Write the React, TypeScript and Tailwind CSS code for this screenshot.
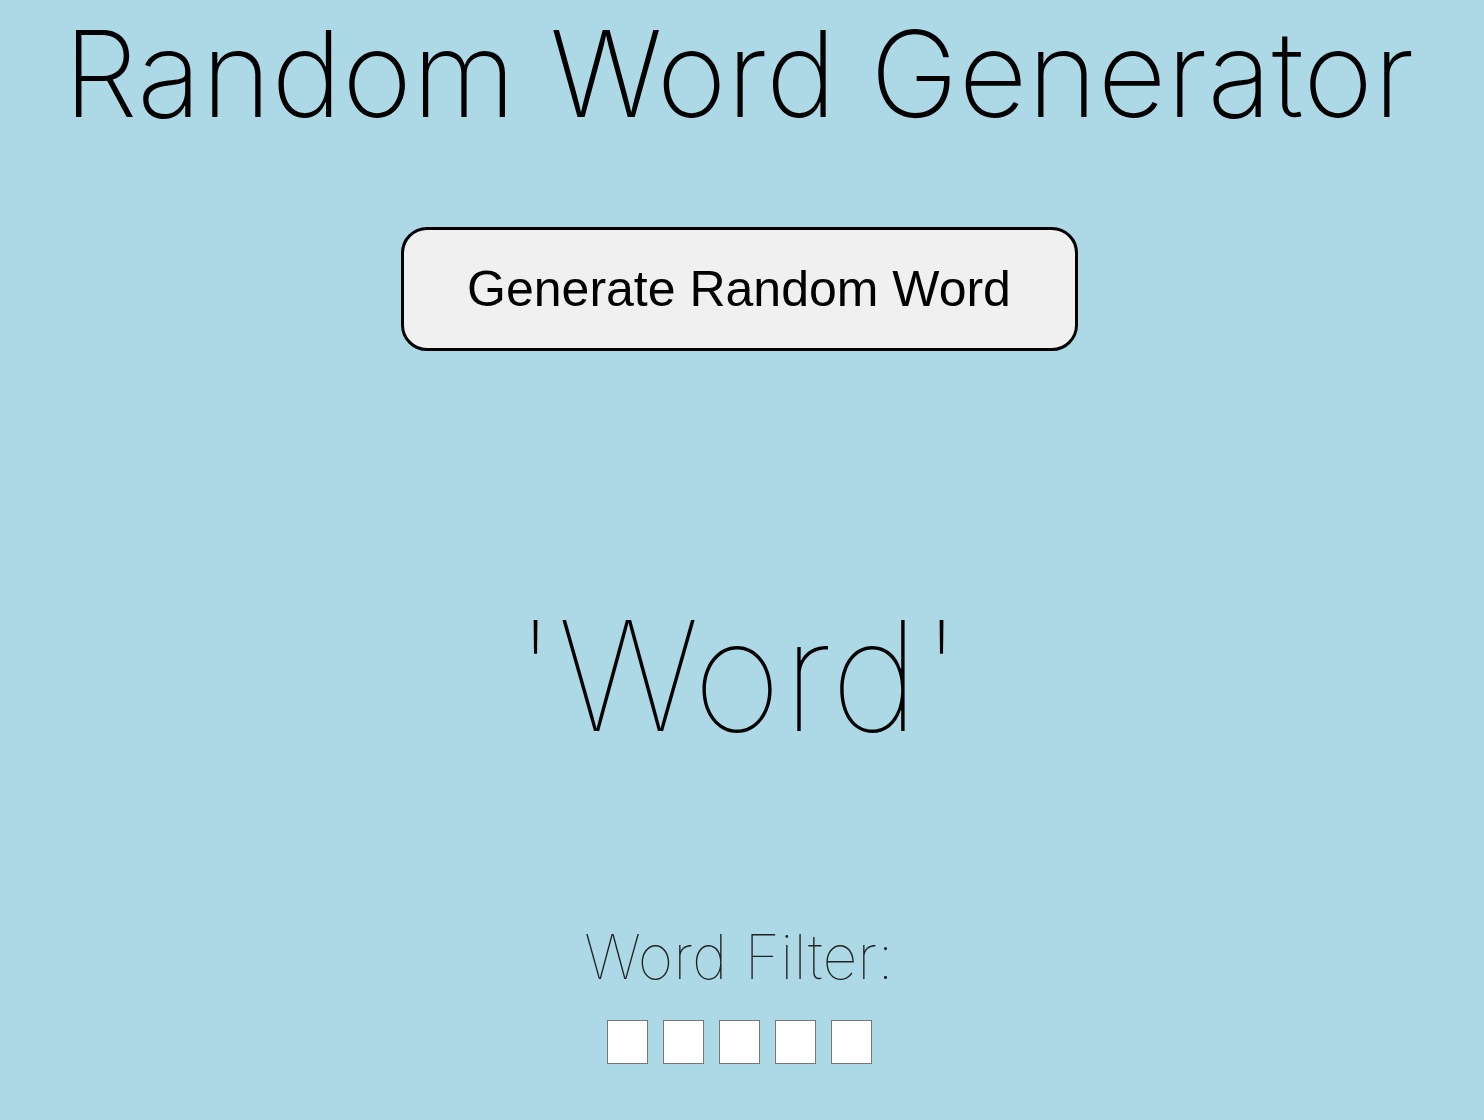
import React from "react";

const App = () => {
  return (
    <div className="min-h-[1120px] w-full bg-[#add8e6] pr-[6px] flex flex-col items-center font-['Inter','Noto_Sans',sans-serif] text-black">
      {/* Title */}
      <h1 className="mt-[4px] text-[119px] leading-[140px] font-extralight tracking-[0.3px]">
        Random Word Generator
      </h1>

      <button className="mt-[83px] w-[677px] h-[124px] bg-[#f0f0f0] border-[3px] border-black rounded-[26px] font-['Liberation_Sans',Arial,sans-serif] text-[50px] text-black">
        Generate Random Word
      </button>

      {/* Current word */}
      <div className="mt-[245px] text-[153px] leading-[160px] font-thin tracking-[1px]">
        'Word'
      </div>

      {/* Filter */}
      <div className="mt-[166px] text-[61px] leading-[70px] font-thin text-[#222]">
        Word Filter:
      </div>
      <div className="mt-[28px] flex gap-[15px]">
        {[0, 1, 2, 3, 4].map((i) => (
          <input
            key={i}
            type="text"
            maxLength={1}
            className="w-[41px] h-[44px] bg-white border border-[#767676] outline-none text-center"
          />
        ))}
      </div>
    </div>
  );
};

export default App;
